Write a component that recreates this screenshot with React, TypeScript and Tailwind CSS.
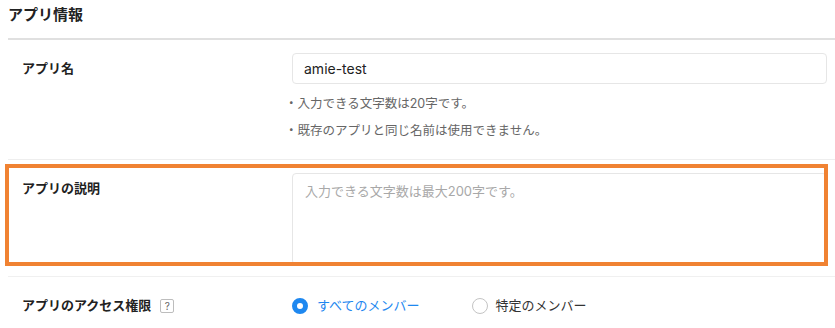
export default function App() {
    return (
        <div className="w-[835px] h-[328px] overflow-hidden bg-white pl-2 text-[#222] font-['Inter','Noto_Sans_CJK_JP',sans-serif]">

            {/* Title */}
            <div className="h-[38px] pt-[4px]">
                <h2 className="text-[15px] leading-[22px] font-bold">アプリ情報</h2>
            </div>
            <div className="h-[2px] bg-[#e0e0e0]" />

            {/* App name */}
            <div className="flex pt-[13px] pb-[15px]">
                <div className="w-[284px] pl-[14px] h-[31px] flex items-center text-[13px] font-bold">アプリ名</div>
                <div className="w-[535px]">
                    <div className="h-[31px] border border-[#e6e6e6] rounded-[4px] px-[11px] flex items-center text-[14px] text-[#222]">
                        amie-test
                    </div>
                    <div className="mt-[6px] -ml-[7px] text-[12.5px] leading-[27px] text-[#666]">
                        <p>・入力できる文字数は20字です。</p>
                        <p>・既存のアプリと同じ名前は使用できません。</p>
                    </div>
                </div>
            </div>
            <div className="h-px bg-[#eeeeee]" />

            {/* Description */}
            <div className="relative flex pt-[13px] pb-[11px]">
                <div className="w-[284px] pl-[14px] pt-[5px] text-[13px] leading-[20px] font-bold">アプリの説明</div>
                <textarea
                    className="w-[535px] h-[92px] resize-none border border-[#e6e6e6] rounded-[4px] px-[12px] pt-[7px] text-[13px] leading-[20px] outline-none placeholder:text-[#a8a8a8]"
                    placeholder="入力できる文字数は最大200字です。"
                />
                <div className="absolute -left-[3px] top-[4px] w-[823px] h-[102px] border-4 border-[#f08232] pointer-events-none" />
            </div>
            <div className="h-px bg-[#f0f0f0]" />

            {/* Access */}
            <div className="flex pt-[19px]">
                <div className="w-[284px] pl-[14px] h-[20px] flex items-center gap-[9px] text-[13px] font-bold">
                    <span>アプリのアクセス権限</span>
                    <span className="w-[14px] h-[14px] border border-[#bdbdbd] rounded-[2px] flex items-center justify-center text-[10px] font-normal text-[#666]">?</span>
                </div>
                <div className="flex items-center h-[20px] text-[13px]">
                    <label className="flex items-center gap-[9px] text-[#1e88f0]">
                        <span className="w-4 h-4 rounded-full border-[5px] border-[#1e88f0] bg-white" />
                        すべてのメンバー
                    </label>
                    <label className="flex items-center gap-[8px] ml-[52px] text-[#333]">
                        <span className="w-4 h-4 rounded-full border border-[#c4c4c4] bg-white" />
                        特定のメンバー
                    </label>
                </div>
            </div>

        </div>
    );
}
